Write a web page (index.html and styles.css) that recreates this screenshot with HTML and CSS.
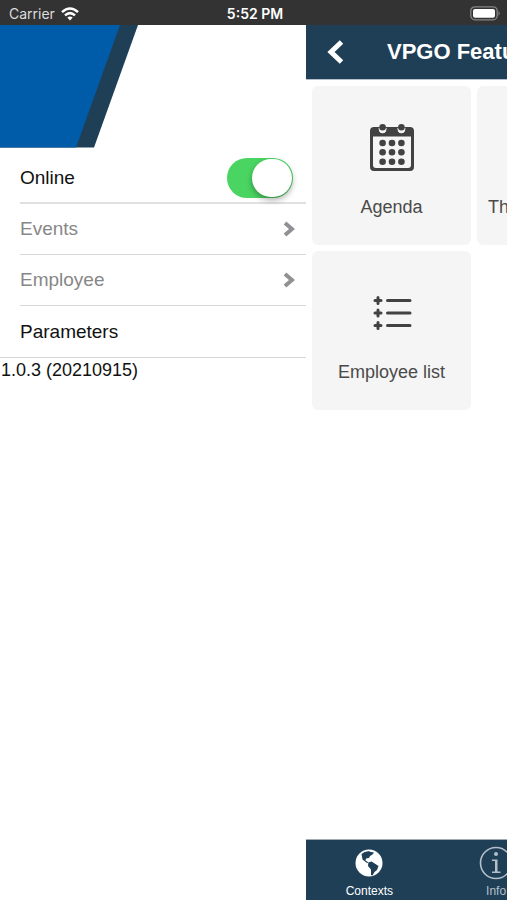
FILE: index.html
```
<!DOCTYPE html>
<html lang="en">
<head>
<meta charset="utf-8">
<meta name="viewport" content="width=device-width, initial-scale=1">
<title>VPGO</title>
<link rel="stylesheet" href="styles.css">
</head>
<body>
<header class="status">
  <div class="carrier">
    <span>Carrier</span>
    <svg width="18" height="14" viewBox="0 0 18 14" fill="none" stroke="#fff" stroke-width="2.5">
      <path d="M1 5.2Q9-2.2 17 5.2M4 8.4Q9 3.9 14 8.4"/>
      <path d="M6.3 10.6Q9 8.6 11.700 10.600L9 13.500Z" fill="#fff" stroke="none"/>
    </svg>
  </div>
  <time>5:52 PM</time>
  <svg class="battery" width="31" height="15" viewBox="0 0 31 15">
    <rect x=".8" y=".8" width="26.400" height="13" rx="4" fill="#333" stroke="#858585" stroke-width="1.300"/>
    <rect x="3" y="3" width="22" height="8.800" rx="2" fill="#fff"/>
    <path d="M28.500 5Q31 7.300 28.500 9.700Z" fill="#858585"/>
  </svg>
</header>
<div class="shell">
  <aside class="drawer">
    <svg class="banner" width="138" height="123" viewBox="0 0 138 123">
      <path d="M0 0H138L94 122.500H0Z" fill="#1f3f57"/>
      <path d="M0 0H120L76 122.500H0Z" fill="#005ba8"/>
    </svg>
    <nav class="menu">
      <label class="row row-switch">Online <input class="switch" type="checkbox" checked></label>
      <a class="row muted" href="#events">Events
        <svg class="chevron" width="12" height="16" viewBox="0 0 12 16"><path d="M2 2L9 8L2 14"/></svg></a>
      <a class="row muted" href="#employee">Employee
        <svg class="chevron" width="12" height="16" viewBox="0 0 12 16"><path d="M2 2L9 8L2 14"/></svg></a>
      <a class="row last" href="#parameters">Parameters</a>
    </nav>
    <p class="version">1.0.3 (20210915)</p>
  </aside>
  <section class="page">
    <header class="bar">
      <button class="back" type="button" aria-label="Back">
        <svg width="18" height="26" viewBox="0 0 18 26"><path d="M14.500 3L4 13L14.500 23" fill="none" stroke="#fff" stroke-width="5"/></svg>
      </button>
      <h1>VPGO Features</h1>
    </header>
    <main class="cards">
      <a class="card" href="#agenda">
        <svg width="46" height="50" viewBox="0 0 46 50" fill="#424242">
          <path fill-rule="evenodd" d="M5 5H41Q45 5 45 9V45Q45 49 41 49H5Q1 49 1 45V9Q1 5 5 5ZM4 14.500V43Q4 46 7 46H39Q42 46 42 43V14.500Z"/>
          <path d="M10.200 6V7.500A3.400 3.400 0 0 0 17 7.500V6ZM29 6V7.500A3.400 3.400 0 0 0 35.800 7.500V6Z" fill="#f5f5f5" stroke="#f5f5f5"/>
          <circle cx="13.600" cy="5.200" r="3.300"/><circle cx="32.400" cy="5.200" r="3.300"/>
          <circle cx="13.600" cy="21" r="3.300"/><circle cx="23" cy="21" r="3.300"/><circle cx="32.400" cy="21" r="3.300"/>
          <circle cx="13.600" cy="30.300" r="3.300"/><circle cx="23" cy="30.300" r="3.300"/><circle cx="32.400" cy="30.300" r="3.300"/>
          <circle cx="13.600" cy="39.700" r="3.300"/><circle cx="23" cy="39.700" r="3.300"/><circle cx="32.400" cy="39.700" r="3.300"/>
        </svg>
        <span>Agenda</span>
      </a>
      <a class="card card-start" href="#th"><span>Th</span></a>
      <a class="card card-first" href="#list">
        <svg width="46" height="50" viewBox="0 0 46 50" fill="none" stroke="#424242" stroke-width="3" stroke-linecap="round">
          <path d="M18.500 13.500H41M18.500 26H41M18.500 38.500H41"/>
          <path d="M6 13.500H12M9 10.500V16.500M6 26H12M9 23V29M6 38.500H12M9 35.500V41.500"/>
        </svg>
        <span>Employee list</span>
      </a>
    </main>
    <nav class="tabs">
      <a class="tab active" href="#contexts">
        <svg width="34" height="34" viewBox="0 0 34 34">
          <circle cx="17" cy="17" r="13.500" fill="#fff"/>
          <path d="M9.500 8Q13 4.800 17 5.200L19 6L22 6.500L20.500 8.500L18 10L17 12L14 12.500L13.500 14.500L16.500 16.500L15 17L10.500 13.500Z" fill="#1f3f57"/>
          <path d="M16.300 16.500L19.500 15.500L23.500 18L26.500 20L25 24L22.500 26L20.500 29.500L19 29L19 23.500L16 20Z" fill="#1f3f57"/>
        </svg>
        <span>Contexts</span>
      </a>
      <a class="tab" href="#info">
        <svg width="34" height="34" viewBox="0 0 34 34">
          <circle cx="17" cy="17" r="15.500" fill="none" stroke="#b5bfc9" stroke-width="1.600"/>
          <circle cx="17" cy="8" r="2" fill="#b5bfc9"/>
          <path d="M13 13.500H18.500V25.500H21.500V27H13V25.500H16V15H13Z" fill="#b5bfc9"/>
        </svg>
        <span>Info</span>
      </a>
    </nav>
  </section>
</div>
</body>
</html>
```
FILE: styles.css
```
* {
  box-sizing: border-box;
}

body {
  margin: 0;
  min-height: 100vh;
  display: flex;
  flex-direction: column;
  background: #fff;
  color: #111;
  font-family: "Liberation Sans", Arial, sans-serif;
  overflow: hidden;
}

a {
  color: inherit;
  text-decoration: none;
}

svg {
  display: block;
  flex: none;
}

.status {
  display: grid;
  grid-template-columns: 1fr auto 1fr;
  align-items: center;
  height: 25px;
  padding: 2px 6px 0 9px;
  background: #333;
  color: #fff;
  font: 400 14px/20px Inter, sans-serif;
}

.status time {
  font-weight: 600;
}

.carrier {
  display: flex;
  align-items: center;
  gap: 6px;
  color: #ddd;
}

.battery {
  justify-self: end;
}

.shell {
  flex: 1;
  display: flex;
  overflow: hidden;
}

.drawer {
  flex: 0 0 306px;
}

.menu {
  padding-left: 20px;
  border-bottom: 1px solid #d8d8d8;
}

.row {
  display: flex;
  align-items: center;
  justify-content: space-between;
  height: 51px;
  padding-right: 11px;
  border-bottom: 1px solid #d8d8d8;
  font-size: 19px;
}

.row-switch {
  height: 56px;
  padding-top: 5px;
  border-bottom: 2px solid #e0e0e0;
}

.last {
  border-bottom: 0;
}

.muted {
  color: #878787;
}

.chevron {
  fill: none;
  stroke: #909095;
  stroke-width: 4;
}

.switch {
  appearance: none;
  width: 66px;
  height: 40px;
  margin: 0 2px 0 0;
  padding: 1px;
  border-radius: 20px;
  background: #4ad562;
}

.switch::before {
  content: "";
  display: block;
  width: 40px;
  height: 38px;
  margin-left: auto;
  border-radius: 19px;
  background: #fff;
  box-shadow: 0 3px 6px #0005;
}

.version {
  margin: 0;
  padding: 1px;
  font-size: 18px;
  line-height: 22px;
}

.page {
  flex: 0 0 100%;
  display: flex;
  flex-direction: column;
}

.bar {
  display: flex;
  align-items: center;
  gap: 42px;
  height: 55px;
  padding-left: 21px;
  background: #1f3f57;
  border-bottom: 1px solid #b4becb;
  color: #fff;
}

.back {
  padding: 0;
  border: 0;
  background: none;
}

h1 {
  margin: 0;
  font-size: 22px;
  line-height: 26px;
}

.cards {
  flex: 1;
  display: grid;
  grid-template-columns: repeat(3, 1fr);
  align-content: start;
  gap: 6px;
  padding: 6px 12px 6px 6px;
}

.card {
  display: flex;
  flex-direction: column;
  align-items: center;
  justify-content: flex-end;
  gap: 23px;
  aspect-ratio: 1;
  padding: 0 11px 26px;
  border-radius: 6px;
  background: #f5f5f5;
  color: #4a4a4a;
  font-size: 18px;
  line-height: 24px;
}

.card-start {
  align-items: flex-start;
}

.card-first {
  grid-column: 1;
}

.tabs {
  display: grid;
  grid-template-columns: repeat(4, 1fr);
  height: 61px;
  padding-top: 6px;
  background: #1f3f57;
  border-top: 1px solid #a0abb2;
}

.tab {
  display: flex;
  flex-direction: column;
  align-items: center;
  gap: 3px;
  color: #b5bfc9;
  font-size: 12px;
  line-height: 16px;
}

.active {
  color: #fff;
}
```
